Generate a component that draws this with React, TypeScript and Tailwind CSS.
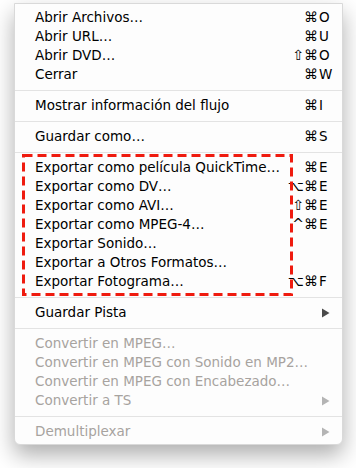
import React from "react";

type Item =
  | { type: "sep" }
  | { type: "item"; label: string; mod?: string; key?: string; disabled?: boolean; sub?: boolean };

const items: Item[] = [
  { type: "item", label: "Abrir Archivos…", mod: "⌘", key: "O" },
  { type: "item", label: "Abrir URL…", mod: "⌘", key: "U" },
  { type: "item", label: "Abrir DVD…", mod: "⇧⌘", key: "O" },
  { type: "item", label: "Cerrar", mod: "⌘", key: "W" },
  { type: "sep" },
  { type: "item", label: "Mostrar información del flujo", mod: "⌘", key: "I" },
  { type: "sep" },
  { type: "item", label: "Guardar como…", mod: "⌘", key: "S" },
  { type: "sep" },
  { type: "item", label: "Exportar como película QuickTime…", mod: "⌘", key: "E" },
  { type: "item", label: "Exportar como DV…", mod: "⌥⌘", key: "E" },
  { type: "item", label: "Exportar como AVI…", mod: "⇧⌘", key: "E" },
  { type: "item", label: "Exportar como MPEG-4…", mod: "^⌘", key: "E" },
  { type: "item", label: "Exportar Sonido…" },
  { type: "item", label: "Exportar a Otros Formatos…" },
  { type: "item", label: "Exportar Fotograma…", mod: "⌥⌘", key: "F" },
  { type: "sep" },
  { type: "item", label: "Guardar Pista", sub: true },
  { type: "sep" },
  { type: "item", label: "Convertir en MPEG…", disabled: true },
  { type: "item", label: "Convertir en MPEG con Sonido en MP2…", disabled: true },
  { type: "item", label: "Convertir en MPEG con Encabezado…", disabled: true },
  { type: "item", label: "Convertir a TS", disabled: true, sub: true },
  { type: "sep" },
  { type: "item", label: "Demultiplexar", disabled: true, sub: true },
];

function Arrow({ disabled }: { disabled?: boolean }) {
  return (
    <svg width="9" height="10" viewBox="0 0 9 10" className="block">
      <path d="M1 0.5 L8.5 5 L1 9.5 Z" fill={disabled ? "#b4b4b4" : "#4a4a4a"} />
    </svg>
  );
}

export default function App() {
  return (
    <div className="w-[356px] h-[468px] bg-white relative overflow-hidden" style={{ fontFamily: '"DejaVu Sans", "Liberation Sans", sans-serif' }}>
      <div className="ml-[14px] mt-[3px] w-[329px] relative rounded-b-[6px] bg-[#fdfdfd] border border-[#d9d9d9] shadow-[0_10px_22px_rgba(0,0,0,0.32)] pt-[4px] pb-[3px]">
        {items.map((it, i) =>
          it.type === "sep" ? (
            <div key={i} className="h-[12px] flex items-center">
              <div className="h-px w-full bg-[#e3e3e3]" />
            </div>
          ) : (
            <div
              key={i}
              className={`h-[19px] flex items-center pl-[20px] pr-[12px] text-[13.5px] leading-[19px] ${it.disabled ? "text-[#a7a39f]" : "text-black"}`}
            >
              <span className="flex-1 whitespace-nowrap">{it.label}</span>
              {it.sub ? (
                <span className="w-[9px] flex items-center">
                  <Arrow disabled={it.disabled} />
                </span>
              ) : (
                <span className="flex items-center">
                  <span className="text-right whitespace-nowrap text-[14px]">{it.mod ?? ""}</span>
                  <span className="w-[12px] pl-[1px] whitespace-nowrap">{it.key ?? ""}</span>
                </span>
              )}
            </div>
          )
        )}
        <svg className="absolute left-[7px] top-[150px]" width="271" height="142" viewBox="0 0 271 142">
          <rect x="1.5" y="1.5" width="268" height="139" fill="none" stroke="#ef1b0f" strokeWidth="3" strokeDasharray="9 5" />
        </svg>
      </div>
    </div>
  );
}
